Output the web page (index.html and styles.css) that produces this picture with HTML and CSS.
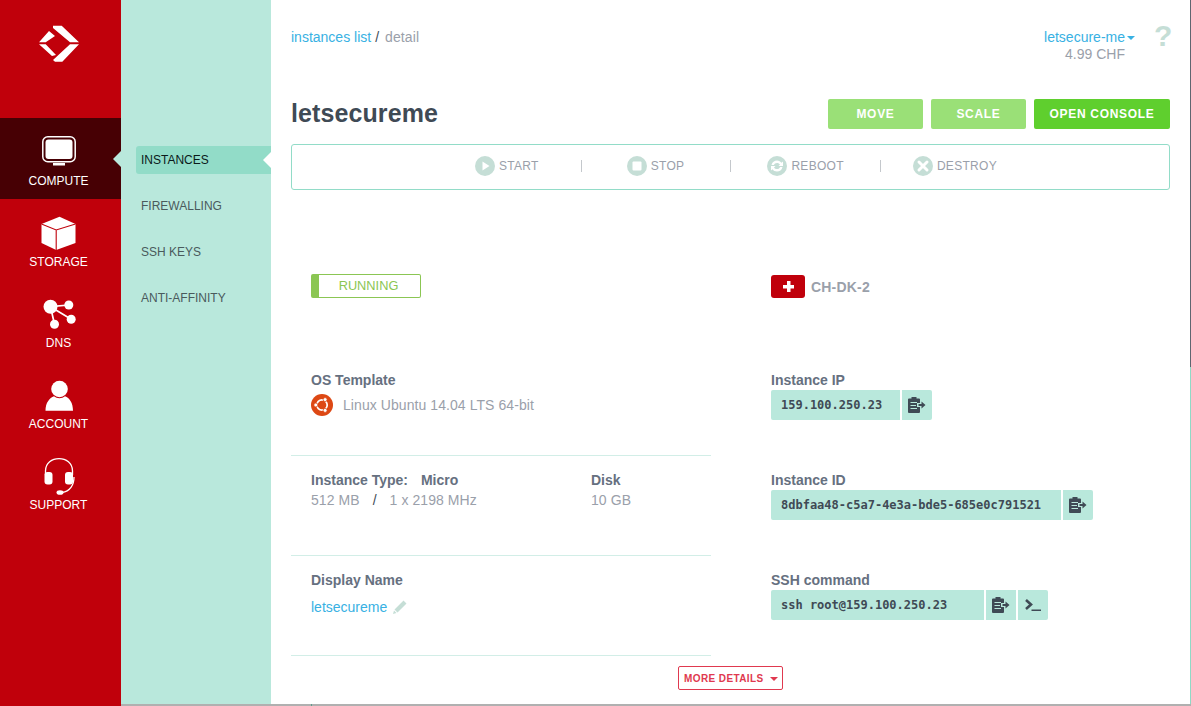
FILE: index.html
```html
<!DOCTYPE html>
<html lang="en">
<head>
<meta charset="utf-8">
<title>letsecureme</title>
<link rel="stylesheet" href="styles.css">
</head>
<body>
<div class="app">
  <nav class="rail">
    <div class="logo">
      <svg width="42" height="38" viewBox="0 0 42 38"><path fill="#fff" d="M1 18.300 11 7 17 12 7.700 18.300Z M15 1.700H23.700L41 18.300H32L15 4Z M1 20.300H7.700L18 31 14 32Z M41 20.300H32L15 36 17 37.700H24.300Z"/></svg>
    </div>
    <a class="rail-item active">
      <svg width="34" height="36" viewBox="0 -2 34 36"><rect x=".8" y=".8" width="32.400" height="25" rx="5" fill="none" stroke="#fff" stroke-width="1.500"/><rect x="3.500" y="3.500" width="27" height="19.500" rx="3" fill="#fff"/><rect x="11" y="27" width="12" height="2.500" fill="#fff"/></svg>
      <span>COMPUTE</span>
    </a>
    <a class="rail-item">
      <svg width="35" height="36" viewBox="0 0 35 36"><path fill="#fff" d="M18.500 1.700 34.500 9V28L15.200 35 .5 28V9Z"/><path fill="none" stroke="#c0000b" stroke-width="1.100" d="M.5 9 15.200 15 34.500 9M15.200 15V35"/></svg>
      <span>STORAGE</span>
    </a>
    <a class="rail-item">
      <svg width="34" height="36" viewBox="0 0 34 36"><g fill="#fff"><circle cx="8.500" cy="10.700" r="7"/><circle cx="26.800" cy="9" r="4.500"/><circle cx="29.200" cy="23.300" r="4.500"/><circle cx="12.500" cy="28.300" r="4.500"/></g><path stroke="#fff" stroke-width="1.700" fill="none" d="M8.500 10.700 26.800 9M8.500 10.700 29.200 23.300M8.500 10.700 12.500 28.300"/></svg>
      <span>DNS</span>
    </a>
    <a class="rail-item">
      <svg width="28" height="36" viewBox="0 0 28 36"><g fill="#fff"><circle cx="14.500" cy="12" r="8.300"/><path d="M.5 33.700C.5 26 4.500 20.800 9 19.300 12 21.800 17 21.800 20 19.300 24.500 20.800 28 26 28 33.700Z"/></g></svg>
      <span>ACCOUNT</span>
    </a>
    <a class="rail-item">
      <svg class="headset" width="32" height="36" viewBox="0 1 32 36"><g fill="none" stroke="#fff" stroke-width="1.300"><path d="M2.500 18V14C2.500 6 9 1.700 16 1.700S29.500 6 29.500 14V18"/><path d="M31 20C31 28 27 34.500 19 35.500"/></g><g fill="#fff"><rect x="1.500" y="15" width="8" height="12.500" rx="3"/><rect x="22" y="15" width="8" height="12.500" rx="3"/><ellipse cx="17" cy="35.500" rx="3.500" ry="2.300"/></g></svg>
      <span>SUPPORT</span>
    </a>
  </nav>
  <aside class="subnav">
    <a class="sub-item current">INSTANCES</a>
    <a class="sub-item">FIREWALLING</a>
    <a class="sub-item">SSH KEYS</a>
    <a class="sub-item">ANTI-AFFINITY</a>
  </aside>
  <main class="content">
    <header class="topbar">
      <div class="crumbs"><a class="link">instances list</a><span class="crumb-sep">/</span><span class="crumb-last">detail</span></div>
      <div class="account">
        <div class="account-text">
          <a class="link account-name">letsecure-me<i class="caret caret-blue"></i></a>
          <div class="balance">4.99 CHF</div>
        </div>
        <div class="help">?</div>
      </div>
    </header>
    <div class="title-row">
      <h1 class="title">letsecureme</h1>
      <div class="actions">
        <a class="btn btn-soft">MOVE</a>
        <a class="btn btn-soft">SCALE</a>
        <a class="btn btn-strong">OPEN CONSOLE</a>
      </div>
    </div>
    <div class="toolbar">
      <a class="tool">
        <svg width="20" height="20" viewBox="0 0 20 20"><circle cx="10" cy="10" r="10" fill="#c5ded6"/><path d="M7.500 5.500 14.500 10 7.500 14.500Z" fill="#fff"/></svg>START</a>
      <i class="tool-sep sep-a"></i>
      <a class="tool">
        <svg width="20" height="20" viewBox="0 0 20 20"><circle cx="10" cy="10" r="10" fill="#c5ded6"/><rect x="5.500" y="5.500" width="9" height="9" rx="1" fill="#fff"/></svg>STOP</a>
      <i class="tool-sep sep-b"></i>
      <a class="tool">
        <svg width="20" height="20" viewBox="0 0 20 20"><circle cx="10" cy="10" r="10" fill="#c5ded6"/><path d="M4.500 9C5 6 7.500 4.500 10 4.500 12 4.500 13.500 5.500 14.500 6.800L16 5.500V10H11.500L13 8.500C12.300 7.500 11.300 6.900 10 6.900 8.500 6.900 7.300 7.800 6.900 9ZM15.500 11C15 14 12.500 15.500 10 15.500 8 15.500 6.500 14.500 5.500 13.200L4 14.500V10H8.500L7 11.500C7.700 12.500 8.700 13.100 10 13.100 11.500 13.100 12.700 12.200 13.100 11Z" fill="#fff"/></svg>REBOOT</a>
      <i class="tool-sep sep-c"></i>
      <a class="tool">
        <svg width="20" height="20" viewBox="0 0 20 20"><circle cx="10" cy="10" r="10" fill="#c5ded6"/><path d="M6 6 14 14M14 6 6 14" stroke="#fff" stroke-width="3" stroke-linecap="round"/></svg>DESTROY</a>
    </div>
    <section class="details">
      <div class="col col-left">
        <div class="status-row"><div class="status">RUNNING</div></div>
        <div class="block block-os">
          <div class="label">OS Template</div>
          <div class="os">
            <svg width="22" height="22" viewBox="0 0 22 22"><circle cx="11" cy="11" r="11" fill="#dd4814"/><circle cx="11" cy="11" r="5.200" fill="none" stroke="#fff" stroke-width="1.700"/><g fill="#fff" stroke="#dd4814" stroke-width=".8"><circle cx="4.800" cy="11" r="2"/><circle cx="14.100" cy="5.600" r="2"/><circle cx="14.100" cy="16.400" r="2"/></g></svg>
            <span>Linux Ubuntu 14.04 LTS 64-bit</span>
          </div>
        </div>
        <div class="block block-type">
          <div class="type-main">
            <div class="label">Instance Type: <span class="label-gap">Micro</span></div>
            <div class="value">512 MB <b class="slash">/</b> 1 x 2198 MHz</div>
          </div>
          <div class="type-disk">
            <div class="label">Disk</div>
            <div class="value">10 GB</div>
          </div>
        </div>
        <div class="block block-name">
          <div class="label">Display Name</div>
          <div class="name-row"><a class="link">letsecureme</a>
            <svg width="14" height="14" viewBox="0 0 14 14"><path fill="#c5ded6" d="M10.500.5 13.500 3.500 4.500 12.500 1.500 9.500ZM1 10.500 3.500 13 0 14Z"/></svg>
          </div>
        </div>
      </div>
      <div class="col col-right">
        <div class="region"><span class="flag"><i class="cross"></i></span><span class="region-name">CH-DK-2</span></div>
        <div class="field">
          <div class="label">Instance IP</div>
          <div class="copy-row">
            <code class="copy-text w-ip">159.100.250.23</code>
            <a class="copy-btn"><svg width="18" height="16" viewBox="0 0 18 16"><path fill="#3f4a55" d="M3.500 0H8.500V1.500H11A1 1 0 0 1 12 2.500V6H9V10H12V15A1 1 0 0 1 11 16H1A1 1 0 0 1 0 15V2.500A1 1 0 0 1 1 1.500H3.500Z"/><path fill="#b9e8dc" d="M2.500 5H9V6H2.500ZM2.500 8H8V9H2.500ZM2.500 11H9V12H2.500Z"/><path fill="#3f4a55" d="M13.500 4.500V7H10.500V9H13.500V11.500L17.500 8Z"/></svg></a>
          </div>
        </div>
        <div class="field">
          <div class="label">Instance ID</div>
          <div class="copy-row">
            <code class="copy-text w-id">8dbfaa48-c5a7-4e3a-bde5-685e0c791521</code>
            <a class="copy-btn"><svg width="18" height="16" viewBox="0 0 18 16"><path fill="#3f4a55" d="M3.500 0H8.500V1.500H11A1 1 0 0 1 12 2.500V6H9V10H12V15A1 1 0 0 1 11 16H1A1 1 0 0 1 0 15V2.500A1 1 0 0 1 1 1.500H3.500Z"/><path fill="#b9e8dc" d="M2.500 5H9V6H2.500ZM2.500 8H8V9H2.500ZM2.500 11H9V12H2.500Z"/><path fill="#3f4a55" d="M13.500 4.500V7H10.500V9H13.500V11.500L17.500 8Z"/></svg></a>
          </div>
        </div>
        <div class="field">
          <div class="label">SSH command</div>
          <div class="copy-row">
            <code class="copy-text w-ssh">ssh root@159.100.250.23</code>
            <a class="copy-btn"><svg width="18" height="16" viewBox="0 0 18 16"><path fill="#3f4a55" d="M3.500 0H8.500V1.500H11A1 1 0 0 1 12 2.500V6H9V10H12V15A1 1 0 0 1 11 16H1A1 1 0 0 1 0 15V2.500A1 1 0 0 1 1 1.500H3.500Z"/><path fill="#b9e8dc" d="M2.500 5H9V6H2.500ZM2.500 8H8V9H2.500ZM2.500 11H9V12H2.500Z"/><path fill="#3f4a55" d="M13.500 4.500V7H10.500V9H13.500V11.500L17.500 8Z"/></svg></a>
            <a class="copy-btn"><svg width="16" height="12" viewBox="0 0 16 12"><path fill="none" stroke="#3f4a55" stroke-width="2.600" d="M1 1 6 5.500 1 10"/><path fill="#3f4a55" d="M6.500 10.500H16V12H6.500Z"/></svg></a>
          </div>
        </div>
      </div>
    </section>
    <div class="more-row"><a class="more">MORE DETAILS<i class="caret caret-red"></i></a></div>
  </main>
  <div class="edge"></div>
</div>
</body>
</html>
```

FILE: styles.css
```css
* { box-sizing: border-box; }
html, body { margin: 0; height: 100%; }
body {
  width: 1191px;
  height: 706px;
  overflow: hidden;
  font-family: "Liberation Sans", Arial, sans-serif;
  background: #fff;
}
a { text-decoration: none; cursor: pointer; }
.app {
  display: flex;
  height: 706px;
}
.rail {
  width: 121px;
  flex: none;
  background: #c0000b;
  color: #fff;
}
.logo {
  height: 118px;
  padding: 24px 0 0 38px;
}
.rail-item {
  position: relative;
  height: 81px;
  padding: 16px 4px 0 0;
  display: flex;
  flex-direction: column;
  align-items: center;
  color: #fff;
  font-size: 12px;
}
.rail-item svg { flex: none; display: block; overflow: visible; }
.rail-item span { line-height: 16px; margin-top: 3px; }
.rail-item.active { background: #470004; }
.rail-item.active::after {
  content: "";
  position: absolute;
  right: 0;
  top: 33px;
  border: 8px solid transparent;
  border-right-color: #b9e8dc;
  border-left-width: 0;
}
.subnav {
  width: 150px;
  flex: none;
  background: #b9e8dc;
  padding: 146px 0 0 15px;
  border-bottom: 2px solid #b0b0b0;
}
.sub-item {
  position: relative;
  display: block;
  height: 28px;
  line-height: 28px;
  margin-bottom: 18px;
  padding-left: 5px;
  font-size: 12px;
  color: #4a5a5c;
}
.sub-item.current {
  background: #92dcc8;
  border-radius: 3px 0 0 3px;
  color: #0b1a1a;
}
.sub-item.current::after {
  content: "";
  position: absolute;
  right: 0;
  top: 6px;
  border: 8px solid transparent;
  border-right-color: #fff;
  border-left-width: 0;
}
.content {
  position: relative;
  flex: 1;
  min-width: 0;
  padding: 0 20px;
  display: flex;
  flex-direction: column;
  border-bottom: 2px solid #b0b0b0;
}
.content::after {
  content: "";
  position: absolute;
  left: 40px;
  bottom: -2px;
  width: 1px;
  height: 2px;
  background: #5f9d8c;
}
.edge {
  width: 1px;
  flex: none;
  background: linear-gradient(#5e6570 0 367px, #8fdac6 367px);
  border-bottom: 2px solid #b0b0b0;
}
.link { color: #38b1e3; }
.topbar {
  display: flex;
  justify-content: space-between;
  height: 99px;
  font-size: 14px;
}
.crumbs { padding-top: 29px; line-height: 17px; }
.crumb-sep { color: #3f4a55; margin: 0 6px 0 4px; }
.crumb-last { color: #9aa0aa; letter-spacing: .1px; }
.account { display: flex; padding-top: 29px; }
.account-text { text-align: right; line-height: 17px; padding-right: 29px; }
.account-name { display: block; margin-right: -10px; }
.balance { color: #9aa0aa; }
.caret { display: inline-block; border: 4px solid transparent; border-bottom-width: 0; margin-left: 2px; vertical-align: middle; }
.caret-blue { border-top-color: #38b1e3; }
.caret-red { border-top-color: #e0394f; margin-left: 6px; }
.help {
  font-weight: 700;
  font-size: 30px;
  line-height: 20px;
  color: #c5ded6;
  margin-top: -3px;
  width: 16px;
}
.title-row {
  display: flex;
  justify-content: space-between;
  align-items: center;
  height: 30px;
}
.title {
  margin: 0 0 2px;
  font-size: 25px;
  letter-spacing: .1px;
  font-weight: 700;
  color: #3f4a55;
}
.actions { display: flex; gap: 8px; }
.btn {
  width: 95px;
  height: 30px;
  line-height: 30px;
  text-align: center;
  font-size: 12px;
  font-weight: 700;
  letter-spacing: .7px;
  color: #fff;
  border-radius: 2px;
}
.btn-soft { background: #9ae077; }
.btn-strong { background: #5fcf2e; width: 136px; }
.toolbar {
  margin-top: 15px;
  height: 46px;
  border: 1px solid #92dcc8;
  border-radius: 3px;
  display: flex;
  align-items: center;
  padding: 0 0 3px 183px;
}
.tool {
  display: flex;
  align-items: center;
  gap: 4px;
  font-size: 12px;
  letter-spacing: .3px;
  color: #9aa0aa;
}
.tool-sep {
  width: 1px;
  height: 12px;
  background: #c4c8cc;
}
.sep-a { margin: 0 45px 0 42px; }
.sep-b { margin: 0 36px 0 46px; }
.sep-c { margin: 0 32px 0 36px; }
.details {
  display: flex;
  flex: 1;
  min-height: 0;
}
.col-left { width: 420px; flex: none; }
.col-right { margin-left: 60px; flex: 1; }
.status-row { padding: 84px 0 0 20px; height: 165px; }
.status {
  width: 110px;
  height: 24px;
  line-height: 21px;
  border: 1px solid #8bc653;
  border-left-width: 8px;
  border-radius: 2px;
  color: #8bc653;
  font-size: 12.800px;
  text-align: center;
  padding-right: 2px;
}
.label { font-size: 14px; font-weight: 700; color: #667080; line-height: 17px; }
.value { font-size: 14px; color: #9aa0aa; line-height: 17px; margin-top: 3px; letter-spacing: .07px; }
.block { border-bottom: 1px solid #d2eee7; padding: 16px 20px 0; height: 100px; }
.block-os { height: 101px; padding-top: 17px; }
.os { display: flex; align-items: center; gap: 10px; margin-top: 5px; font-size: 14px; letter-spacing: .07px; color: #9aa0aa; line-height: 22px; }
.os svg { flex: none; }
.block-type { display: flex; }
.type-main { width: 280px; }
.label-gap { margin-left: 9px; }
.slash { color: #3f4a55; margin: 0 9px; font-weight: 400; }
.name-row { display: flex; align-items: center; gap: 6px; font-size: 14px; margin-top: 10px; }
.region {
  display: flex;
  align-items: flex-start;
  gap: 6px;
  padding-top: 85px;
  height: 165px;
}
.flag {
  width: 34px;
  height: 23px;
  background: #c0000b;
  border-radius: 3px;
  position: relative;
  display: block;
}
.cross {
  position: absolute;
  left: 12px;
  top: 6px;
  width: 11px;
  height: 11px;
  background:
    linear-gradient(#fff, #fff) center / 11px 3.500px no-repeat,
    linear-gradient(#fff, #fff) center / 3.500px 11px no-repeat;
}
.region-name { font-size: 14px; letter-spacing: .2px; font-weight: 700; color: #9aa0aa; line-height: 25px; }
.field { height: 100px; padding-top: 17px; }
.copy-row { display: flex; gap: 2px; margin-top: 1px; }
.copy-text {
  height: 30px;
  line-height: 30px;
  padding-left: 10px;
  font-family: "DejaVu Sans Mono", monospace;
  font-size: 12px;
  font-weight: 700;
  color: #3f4a55;
  background: #b9e8dc;
  border-radius: 2px 0 0 2px;
  display: block;
}
.w-ip { width: 129px; }
.w-id { width: 290px; }
.w-ssh { width: 213px; }
.copy-btn {
  width: 30px;
  height: 30px;
  background: #b9e8dc;
  display: flex;
  align-items: center;
  justify-content: center;
}
.copy-btn:last-child { border-radius: 0 2px 2px 0; }
.more-row {
  display: flex;
  justify-content: center;
  height: 49px;
  padding: 11px 0 0 0;
  margin-top: -49px;
}
.more {
  height: 24px;
  width: 105px;
  border: 1px solid #e0394f;
  border-radius: 2px;
  color: #e0394f;
  font-size: 10px;
  font-weight: 700;
  letter-spacing: .4px;
  line-height: 24px;
  padding-left: 5px;
  white-space: nowrap;
}
```
